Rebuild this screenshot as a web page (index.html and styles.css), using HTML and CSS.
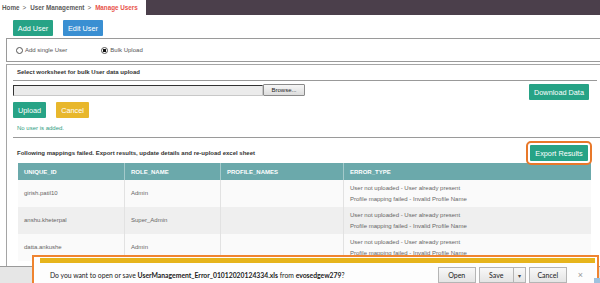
FILE: index.html
```html
<!DOCTYPE html>
<html lang="en">
<head>
    <meta charset="UTF-8">
    <meta name="viewport" content="width=device-width, initial-scale=1.0">
    <title>Manage Users</title>
    <link rel="stylesheet" href="styles.css">
</head>
<body>
    <div class="page">
        <div class="topbar">
            <div class="crumbs">Home<span class="sep">&gt;</span>User Management<span class="sep">&gt;</span><span class="current">Manage Users</span></div>
            <div class="banner"></div>
        </div>

        <div class="tabs">
            <button type="button" class="btn green">Add User</button>
            <button type="button" class="btn blue">Edit User</button>
        </div>

        <div class="mode">
            <label class="radio-label"><input type="radio" name="mode" value="single"> Add single User</label>
            <label class="radio-label"><input type="radio" name="mode" value="bulk" checked> Bulk Upload</label>
        </div>

        <div class="panel">
            <div class="panel-title">Select worksheet for bulk User data upload</div>

            <div class="upload-row">
                <div class="file-field">
                    <span class="file-path"></span>
                    <button type="button" class="browse">Browse...</button>
                </div>
                <button type="button" class="btn green">Download Data</button>
            </div>

            <div class="actions">
                <button type="button" class="btn green">Upload</button>
                <button type="button" class="btn yellow">Cancel</button>
            </div>

            <div class="status">No user is added.</div>

            <div class="results">
                <div class="results-head">
                    <span class="results-note">Following mappings failed. Export results, update details and re-upload excel sheet</span>
                    <button type="button" class="btn green export">Export Results</button>
                </div>
                <table class="result-table">
                    <thead>
                        <tr>
                            <th class="col-id">UNIQUE_ID</th>
                            <th class="col-role">ROLE_NAME</th>
                            <th class="col-profile">PROFILE_NAMES</th>
                            <th>ERROR_TYPE</th>
                        </tr>
                    </thead>
                    <tbody>
                        <tr>
                            <td>girish.patil10</td>
                            <td>Admin</td>
                            <td></td>
                            <td>User not uploaded - User already present<br>Profile mapping failed - Invalid Profile Name</td>
                        </tr>
                        <tr>
                            <td>anshu.kheterpal</td>
                            <td>Super_Admin</td>
                            <td></td>
                            <td>User not uploaded - User already present<br>Profile mapping failed - Invalid Profile Name</td>
                        </tr>
                        <tr>
                            <td>datta.ankushe</td>
                            <td>Admin</td>
                            <td></td>
                            <td>User not uploaded - User already present<br>Profile mapping failed - Invalid Profile Name</td>
                        </tr>
                    </tbody>
                </table>
            </div>
        </div>
    </div>

    <!-- browser download prompt -->
    <div class="download-bar">
        <div class="download-inner">
            <span class="download-text">Do you want to open or save <b>UserManagement_Error_01012020124334.xls</b> from <b>evosedgew279</b>?</span>
            <div class="download-buttons">
                <button type="button" class="dl-btn open">Open</button>
                <div class="split">
                    <button type="button" class="dl-btn save">Save</button>
                    <button type="button" class="dl-btn arrow">&#9662;</button>
                </div>
                <button type="button" class="dl-btn cancel">Cancel</button>
                <span class="dl-close">&#215;</span>
            </div>
        </div>
    </div>
    <div class="corner"></div>
</body>
</html>
```

FILE: styles.css
```css
html, body {
    margin: 0;
    padding: 0;
    height: 283px;
    overflow: hidden;
    background-color: #e6e6e6;
}
body {
    font-family: "Liberation Sans", Arial, sans-serif;
    color: #444;
    position: relative;
}
.page {
    background-color: #fff;
    height: 266px;
    border-bottom: 1px solid #9a9a9a;
}
.topbar {
    display: flex;
    height: 15px;
}
.crumbs {
    width: 144px;
    padding-left: 2px;
    font-size: 6.3px;
    font-weight: bold;
    line-height: 15px;
    color: #5a5a5a;
    white-space: nowrap;
    overflow: hidden;
}
.crumbs .sep {
    margin: 0 4px 0 3px;
    font-weight: normal;
}
.crumbs .current {
    color: #e8534a;
}
.banner {
    flex: 1;
    background-color: #4b3f4b;
}
.btn {
    height: 16px;
    padding: 0;
    border: none;
    border-radius: 1px;
    font-family: "Liberation Sans", Arial, sans-serif;
    font-size: 7.3px;
    color: #fff;
    white-space: nowrap;
    cursor: pointer;
}
.btn.green {
    background-color: #27a386;
}
.btn.blue {
    background-color: #3a8fd2;
}
.btn.yellow {
    background-color: #e8b72c;
}
.tabs {
    display: flex;
    gap: 10px;
    padding: 5px 0 0 13px;
}
.tabs .btn {
    width: 40px;
}
.mode {
    display: flex;
    align-items: center;
    height: 22px;
    margin: 2px 0 0 6px;
    border: 1px solid #9a9a9a;
    border-right: none;
    padding-left: 9px;
}
.radio-label {
    display: flex;
    align-items: center;
    gap: 2px;
    font-size: 6px;
    color: #555;
}
.radio-label + .radio-label {
    margin-left: 34px;
}
.radio-label input {
    appearance: none;
    width: 7px;
    height: 7px;
    margin: 0;
    border: 1px solid #555;
    border-radius: 50%;
    background-color: #fff;
}
.radio-label input:checked {
    background: radial-gradient(circle, #111 0 1.6px, #fff 2px);
}
.panel {
    margin: 2px 0 0 6px;
    border: 1px solid #a5a5a5;
    border-right: none;
    border-bottom: none;
    padding: 0 3px 0 6px;
    height: 201px;
}
.panel-title {
    height: 15px;
    line-height: 15px;
    padding-left: 4px;
    font-size: 6px;
    font-weight: bold;
    color: #333;
    border-bottom: 1px solid #999;
}
.upload-row {
    display: flex;
    justify-content: space-between;
    align-items: flex-start;
    margin-top: 3px;
    padding-right: 8px;
}
.upload-row .btn {
    width: 60px;
}
.file-field {
    display: flex;
    align-items: flex-start;
}
.file-path {
    width: 248px;
    height: 9px;
    margin-top: 1px;
    background-color: #ebebeb;
    border: 1px solid #c8c8c8;
    border-top-color: #333;
    border-left-color: #333;
}
.browse {
    width: 42px;
    height: 12px;
    padding: 0;
    border: 1px solid #8a8a8a;
    border-radius: 1px;
    background: linear-gradient(#f6f6f6, #dcdcdc);
    font-family: "Liberation Sans", Arial, sans-serif;
    font-size: 6px;
    color: #222;
}
.actions {
    display: flex;
    gap: 10px;
    margin-top: 2px;
}
.actions .btn {
    width: 33px;
}
.status {
    padding: 5px 4px 4px;
    line-height: 10px;
    font-size: 6px;
    color: #2e9e82;
}
.results {
    margin-right: -3px;
    border-top: 1px solid #9a9a9a;
    padding: 0 9px 0 5px;
}
.results-head {
    display: flex;
    justify-content: space-between;
    align-items: flex-end;
    height: 23px;
    padding-bottom: 2px;
}
.results-note {
    line-height: 16px;
    font-size: 6px;
    font-weight: bold;
    color: #333;
    margin-left: -1px;
}
.btn.export {
    width: 58px;
    margin-right: 3px;
    outline: 2px solid #e8782a;
    outline-offset: 2px;
}
.result-table {
    width: 100%;
    border-collapse: collapse;
    font-size: 6px;
}
.result-table th {
    height: 17px;
    padding: 0 6px;
    background-color: #6ba9ab;
    color: #fff;
    text-align: left;
    font-weight: bold;
    border-left: 1px solid #a4cacb;
}
.result-table th:first-child,
.result-table td:first-child {
    border-left: none;
}
.col-id {
    width: 94px;
}
.col-role {
    width: 83px;
}
.col-profile {
    width: 110px;
}
.result-table td {
    height: 27px;
    padding: 0 6px;
    line-height: 11px;
    color: #666;
    border-left: 1px solid #e2e2e2;
    background-color: #fafafa;
}
.result-table tbody tr:nth-child(even) td {
    background-color: #efefef;
}
.download-bar {
    position: absolute;
    left: 32px;
    top: 255px;
    width: 555px;
    height: 30px;
    border: 2px solid #ef8430;
    border-bottom: none;
    background-color: #fff;
    padding: 0 2px 0 6px;
}
.download-inner {
    display: flex;
    align-items: center;
    justify-content: space-between;
    height: 24px;
    border-top: 5px solid #e6b41c;
    margin-top: 1px;
    padding: 0 12px 0 10px;
    background-color: #fdfdfd;
}
.download-text {
    font-family: Lato, "Open Sans", sans-serif;
    font-size: 6.8px;
    color: #222;
    white-space: nowrap;
}
.download-text b {
    font-weight: bold;
}
.download-buttons {
    display: flex;
    align-items: center;
    gap: 3px;
}
.dl-btn {
    height: 16px;
    padding: 0;
    border: 1px solid #b5b5b5;
    background: linear-gradient(#f8f8f8, #e4e4e4);
    font-family: Lato, "Open Sans", sans-serif;
    font-size: 7px;
    color: #222;
}
.dl-btn.open {
    width: 38px;
}
.split {
    display: flex;
}
.dl-btn.save {
    width: 35px;
}
.dl-btn.arrow {
    width: 12px;
    border-left: none;
    font-size: 6px;
    color: #444;
}
.dl-btn.cancel {
    width: 38px;
}
.dl-close {
    margin-left: 8px;
    font-size: 9px;
    color: #999;
}
.corner {
    position: absolute;
    right: 0;
    bottom: 0;
    width: 6px;
    height: 5px;
    background-color: #9fc2df;
}
```
